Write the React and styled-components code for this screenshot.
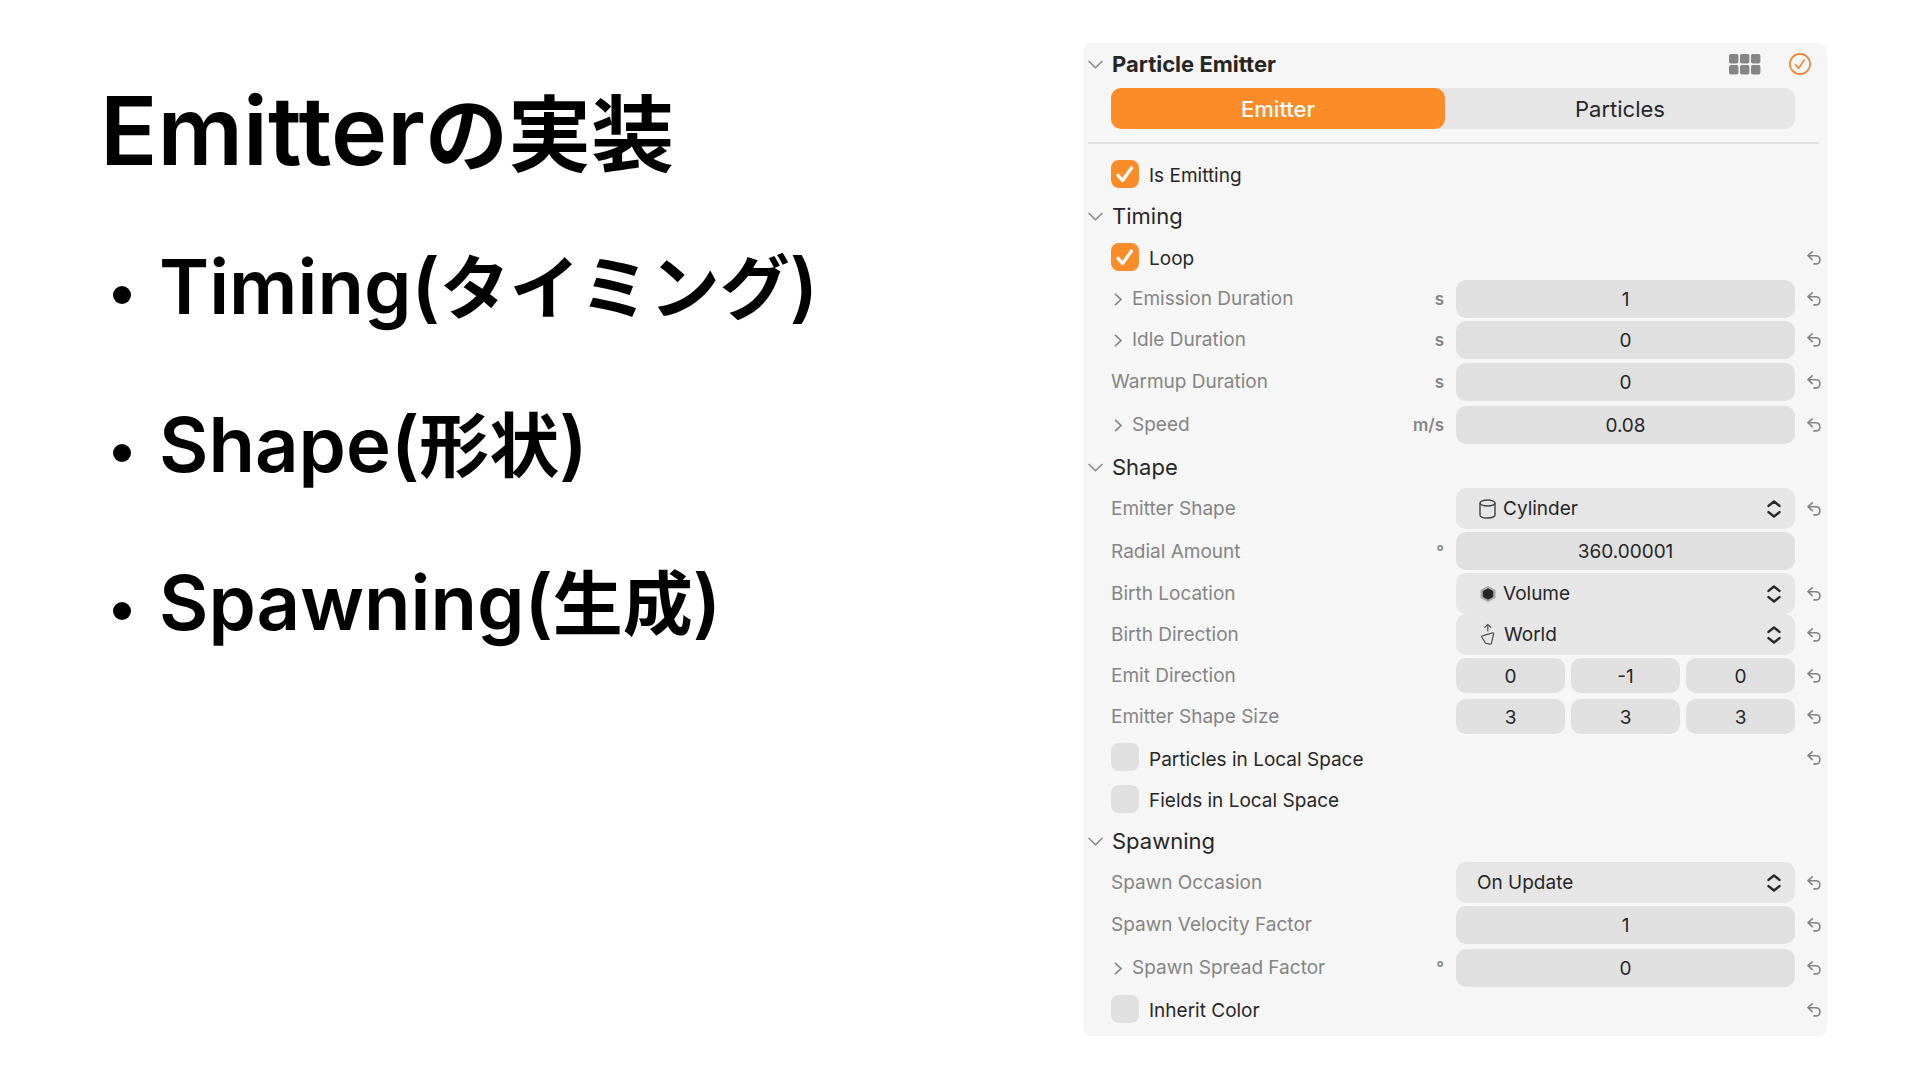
import React, { Component } from 'react';
import styled, { createGlobalStyle } from 'styled-components';

const GlobalStyle = createGlobalStyle`
* {
box-sizing: border-box;
}
body {
margin: 0;
background: #FFFFFF;
font-family: Inter, "Noto Sans CJK JP", sans-serif;
color: #262626;
}
button, input, select {
font: inherit;
color: inherit;
margin: 0;
padding: 0;
border: 0;
}
`;

const Slide = styled.div`
display: grid;
grid-template-columns: minmax(0, 1fr) min(744px, 50vw);
align-items: start;
padding: 43px 93px 43px 100px;
`;

const Notes = styled.main`
color: #000000;
font-weight: 600;
white-space: nowrap;
`;

const Title = styled.h1`
margin: 24px 0 0;
font-size: 95px;
font-weight: 600;
line-height: 128px;
`;

const Points = styled.ul`
display: flex;
flex-direction: column;
gap: 58px;
margin: 41px 0 0;
padding: 0 0 0 13px;
list-style: none;
font-size: 76px;
line-height: 100px;
`;

const Point = styled.li`
display: flex;
align-items: center;

&::before {
content: "";
width: 18px;
height: 18px;
margin: 18px 28px 0 0;
border-radius: 50%;
background: #000000;
}
`;

const Japanese = styled.span`
font-family: "Noto Sans CJK JP", sans-serif;
font-size: ${props => props.$size}px;
font-weight: 700;
line-height: 1;
`;

const Panel = styled.section`
padding: 0 6px 6px 5px;
background: #F6F6F6;
border-radius: 8px;
`;

const PanelHeader = styled.header`
display: flex;
align-items: center;
height: 42px;
padding-right: 10px;
`;

const PanelTitle = styled.h2`
flex: 1;
margin: 0;
font-size: 22px;
font-weight: 700;
line-height: 28px;
`;

const IconButton = styled.button`
display: flex;
align-items: center;
justify-content: ${props => props.$align || 'center'};
width: ${props => props.$width}px;
background: none;
color: ${props => props.$color || '#858585'};
cursor: pointer;
`;

const Tabs = styled.div`
display: flex;
height: 41px;
margin: 3px 26px 13px 23px;
background: #E6E6E6;
border-radius: 10px;
`;

const Tab = styled.button`
flex: ${props => props.$active ? 334 : 350};
background: ${props => props.$active ? '#FB8C28' : 'transparent'};
border-radius: 10px;
color: ${props => props.$active ? '#FFFFFF' : '#262626'};
font-size: 22px;
font-weight: ${props => props.$active ? 500 : 400};
cursor: pointer;
`;

const Divider = styled.hr`
height: 2px;
margin: 0 2px 10px 0;
border: 0;
background: #E2E2E2;
`;

const SectionRow = styled.div`
display: flex;
align-items: center;
height: 42px;
`;

const SectionTitle = styled.h3`
margin: 0;
font-size: 22px;
font-weight: 400;
line-height: 28px;
`;

const Row = styled.div`
display: grid;
grid-template-columns: 345fr 339fr 26px;
align-items: center;
height: ${props => props.$height || 41}px;
padding-left: 23px;
`;

const CheckRow = styled(Row)`
grid-template-columns: 1fr 26px;
`;

const LabelCell = styled.div`
display: flex;
align-items: center;
padding: 1px 12px 0 0;
color: #858585;
font-size: 19px;
line-height: 24px;
`;

const FieldLabel = styled.label`
flex: 1;
white-space: nowrap;
`;

const Unit = styled.span`
font-size: 17px;
font-weight: 600;
`;

const NumberInput = styled.input`
width: 100%;
min-width: 0;
height: ${props => props.$short ? 35 : 38}px;
padding-top: 1px;
background: #E0E0E0;
border-radius: 10px;
font-size: 19px;
text-align: center;
`;

const Vector = styled.div`
display: grid;
grid-template-columns: repeat(3, 1fr);
gap: 6px;
`;

const SelectBox = styled.div`
display: flex;
align-items: center;
gap: 7px;
height: 41px;
padding: 0 14px 0 ${props => props.$hasIcon ? 23 : 21}px;
background: #E6E6E6;
border-radius: 10px;
`;

const Select = styled.select`
flex: 1;
min-width: 0;
height: 100%;
appearance: none;
background: none;
font-size: 19px;
`;

const CheckLabel = styled.label`
display: flex;
align-items: center;
gap: 10px;
padding-bottom: 2px;
font-size: 19px;
line-height: 24px;
`;

const CheckText = styled.span`
padding-top: 5px;
`;

const CheckBox = styled.span`
display: grid;

& > * {
grid-area: 1 / 1;
}

svg {
pointer-events: none;
}
`;

const CheckInput = styled.input`
appearance: none;
width: 28px;
height: 28px;
background: #E0E0E0;
border-radius: 8px;

&:checked {
background: #FB8C28;
}
`;

const ChevronDown = () => (
  <svg width="15" height="9" viewBox="0 0 15 9" fill="none" stroke="currentColor" strokeWidth="1.5">
    <path d="M.6 1l6.9 6.8L14.4 1" />
  </svg>
);

const ChevronRight = () => (
  <svg width="8" height="13" viewBox="0 0 8 13" fill="none" stroke="currentColor" strokeWidth="1.6">
    <path d="M1 .8l6 5.7-6 5.7" />
  </svg>
);

const GridIcon = () => (
  <svg width="32" height="21" viewBox="0 0 32 21" fill="currentColor">
    {[0, 11, 22].map(x => [0, 11].map(y => (
      <rect key={`${x}-${y}`} x={x} y={y} width="9.4" height="9.6" rx="1.8" />
    )))}
  </svg>
);

const CircleCheck = () => (
  <svg width="22" height="22" viewBox="0 0 22 22" fill="none" stroke="currentColor" strokeWidth="1.6">
    <circle cx="11" cy="11" r="10.1" />
    <path d="M6.6 11.8l3 3.5 5.6-8.2" strokeLinecap="round" strokeLinejoin="round" />
  </svg>
);

const ResetIcon = () => (
  <svg width="14" height="14" viewBox="0 0 14 14" fill="none" stroke="currentColor" strokeWidth="1.6" strokeLinecap="round" strokeLinejoin="round">
    <path d="M5.2.9L1 4.7l4.2 3.9M1.2 4.7h7.6c2.5 0 4.1 1.6 4.1 4s-1.6 4.200-4.100 4.200H7" />
  </svg>
);

const UpDown = () => (
  <svg width="14" height="18" viewBox="0 0 14 18" fill="none" stroke="#262626" strokeWidth="2.4" strokeLinecap="round" strokeLinejoin="round">
    <path d="M1.500 5.900L7 1.500l5.500 4.400M1.500 12.100L7 16.500l5.500-4.400" />
  </svg>
);

const Tick = () => (
  <svg width="28" height="28" viewBox="0 0 28 28" fill="none" stroke="#FFFFFF" strokeWidth="3.300" strokeLinecap="round" strokeLinejoin="round">
    <path d="M7 15.200l4.500 5.300 9-12.500" />
  </svg>
);

const CylinderIcon = () => (
  <svg width="17" height="20" viewBox="0 0 17 20" fill="none" stroke="#404040" strokeWidth="1.400">
    <ellipse cx="8.500" cy="4" rx="7.500" ry="3" />
    <path d="M1 4v12c0 1.700 3.400 3 7.500 3s7.500-1.300 7.500-3V4" />
  </svg>
);

const VolumeIcon = () => (
  <svg width="17" height="16" viewBox="0 0 17 16">
    <path d="M9 .5l7 3.700v7.600l-7 3.700-7-3.700V4.200z" fill="#A8A8A8" stroke="#A8A8A8" strokeLinejoin="round" />
    <path d="M9 2.800l4.700 2.500v5.400L9 13.200l-4.700-2.500V5.300z" fill="#262626" stroke="#262626" strokeLinejoin="round" />
  </svg>
);

const WorldIcon = () => (
  <svg width="18" height="24" viewBox="0 0 18 24" fill="none" stroke="#505050" strokeWidth="1.200" strokeLinecap="round" strokeLinejoin="round">
    <path d="M8.800 8V1.500M5.800 4.300l3-3 3 3M3.500 12.800l10-2.900c.9-.3 1.300 0 1.100.9l-2.100 9.300c-.2.900-.7 1.300-1.600 1.100l-3.400-.8c-.7-.2-1.100-.5-1.500-1.100l-3.200-5.100c-.4-.7-.1-1.200.7-1.400z" />
  </svg>
);

const icons = { Cylinder: CylinderIcon, Volume: VolumeIcon, World: WorldIcon };

const points = [
  { en: 'Timing', ja: 'タイミング' },
  { en: 'Shape', ja: '形状' },
  { en: 'Spawning', ja: '生成' },
];

const sections = [
  {
    fields: [{ type: 'check', label: 'Is Emitting', value: true }],
  },
  {
    title: 'Timing',
    fields: [
      { type: 'check', label: 'Loop', value: true, reset: true },
      { type: 'number', label: 'Emission Duration', unit: 's', value: '1', expands: true, reset: true },
      { type: 'number', label: 'Idle Duration', unit: 's', value: '0', expands: true, reset: true },
      { type: 'number', label: 'Warmup Duration', unit: 's', value: '0', height: 43, reset: true },
      { type: 'number', label: 'Speed', unit: 'm/s', value: '0.08', height: 43, expands: true, reset: true },
    ],
  },
  {
    title: 'Shape',
    fields: [
      { type: 'select', label: 'Emitter Shape', value: 'Cylinder', reset: true },
      { type: 'number', label: 'Radial Amount', unit: '°', value: '360.00001', height: 44 },
      { type: 'select', label: 'Birth Location', value: 'Volume', reset: true },
      { type: 'select', label: 'Birth Direction', value: 'World', reset: true },
      { type: 'vector', label: 'Emit Direction', value: ['0', '-1', '0'], reset: true },
      { type: 'vector', label: 'Emitter Shape Size', value: ['3', '3', '3'], reset: true },
      { type: 'check', label: 'Particles in Local Space', value: false, height: 42, reset: true },
      { type: 'check', label: 'Fields in Local Space', value: false },
    ],
  },
  {
    title: 'Spawning',
    fields: [
      { type: 'select', label: 'Spawn Occasion', value: 'On Update', reset: true },
      { type: 'number', label: 'Spawn Velocity Factor', value: '1', height: 43, reset: true },
      { type: 'number', label: 'Spawn Spread Factor', unit: '°', value: '0', height: 43, expands: true, reset: true },
      { type: 'check', label: 'Inherit Color', value: false, reset: true },
    ],
  },
];

const Reset = ({ label }) => (
  <IconButton $width={26} $align="flex-end" aria-label={`Reset ${label}`}><ResetIcon /></IconButton>
);

const Control = ({ id, field }) => {
  if (field.type === 'vector') {
    return (
      <Vector>
        {field.value.map((value, i) => (
          <NumberInput key={i} id={i === 0 ? id : undefined} aria-label={`${field.label} ${'XYZ'[i]}`} defaultValue={value} $short />
        ))}
      </Vector>
    );
  }
  if (field.type === 'select') {
    const Icon = icons[field.value];
    return (
      <SelectBox $hasIcon={Boolean(Icon)}>
        {Icon && <Icon />}
        <Select id={id} defaultValue={field.value}>
          <option>{field.value}</option>
        </Select>
        <UpDown />
      </SelectBox>
    );
  }
  return <NumberInput id={id} defaultValue={field.value} />;
};

const Field = ({ field }) => {
  const id = field.label.toLowerCase().replace(/ /g, '-');
  if (field.type === 'check') {
    return (
      <CheckRow $height={field.height}>
        <CheckLabel htmlFor={id}>
          <CheckBox>
            <CheckInput id={id} type="checkbox" defaultChecked={field.value} />
            {field.value && <Tick />}
          </CheckBox>
          <CheckText>{field.label}</CheckText>
        </CheckLabel>
        {field.reset && <Reset label={field.label} />}
      </CheckRow>
    );
  }
  return (
    <Row $height={field.height}>
      <LabelCell>
        {field.expands && <IconButton $width={21} $align="space-around" aria-label={`Expand ${field.label}`}><ChevronRight /><span /></IconButton>}
        <FieldLabel htmlFor={id}>{field.label}</FieldLabel>
        {field.unit && <Unit>{field.unit}</Unit>}
      </LabelCell>
      <Control id={id} field={field} />
      {field.reset && <Reset label={field.label} />}
    </Row>
  );
};

class App extends Component {
  state = {
    currentTab: 'Emitter'
  }

  changeTab = tab => {
    this.setState({ currentTab: tab })
  }

  render() {
    const { currentTab } = this.state;
    return (
      <Slide>
        <GlobalStyle />
        <Notes>
          <Title>Emitter<Japanese $size={83}>の実装</Japanese></Title>
          <Points>
            {points.map(item => (
              <Point key={item.en}>
                <span>{item.en}(<Japanese $size={70}>{item.ja}</Japanese>)</span>
              </Point>
            ))}
          </Points>
        </Notes>
        <Panel>
          <PanelHeader>
            <IconButton $width={24} $align="flex-start" aria-label="Collapse Particle Emitter"><ChevronDown /></IconButton>
            <PanelTitle>Particle Emitter</PanelTitle>
            <IconButton $width={32} aria-label="Presets"><GridIcon /></IconButton>
            <IconButton $width={50} $align="flex-end" $color="#EE8130" aria-label="Enabled"><CircleCheck /></IconButton>
          </PanelHeader>
          <Tabs>
            {['Emitter', 'Particles'].map(tab => (
              <Tab key={tab} $active={tab === currentTab} onClick={() => this.changeTab(tab)}>{tab}</Tab>
            ))}
          </Tabs>
          <Divider />
          {sections.map(section => (
            <div key={section.title || 'main'}>
              {section.title && (
                <SectionRow>
                  <IconButton $width={24} $align="flex-start" aria-label={`Collapse ${section.title}`}><ChevronDown /></IconButton>
                  <SectionTitle>{section.title}</SectionTitle>
                </SectionRow>
              )}
              {section.fields.map(field => <Field key={field.label} field={field} />)}
            </div>
          ))}
        </Panel>
      </Slide>
    )
  }
}

export default App;
